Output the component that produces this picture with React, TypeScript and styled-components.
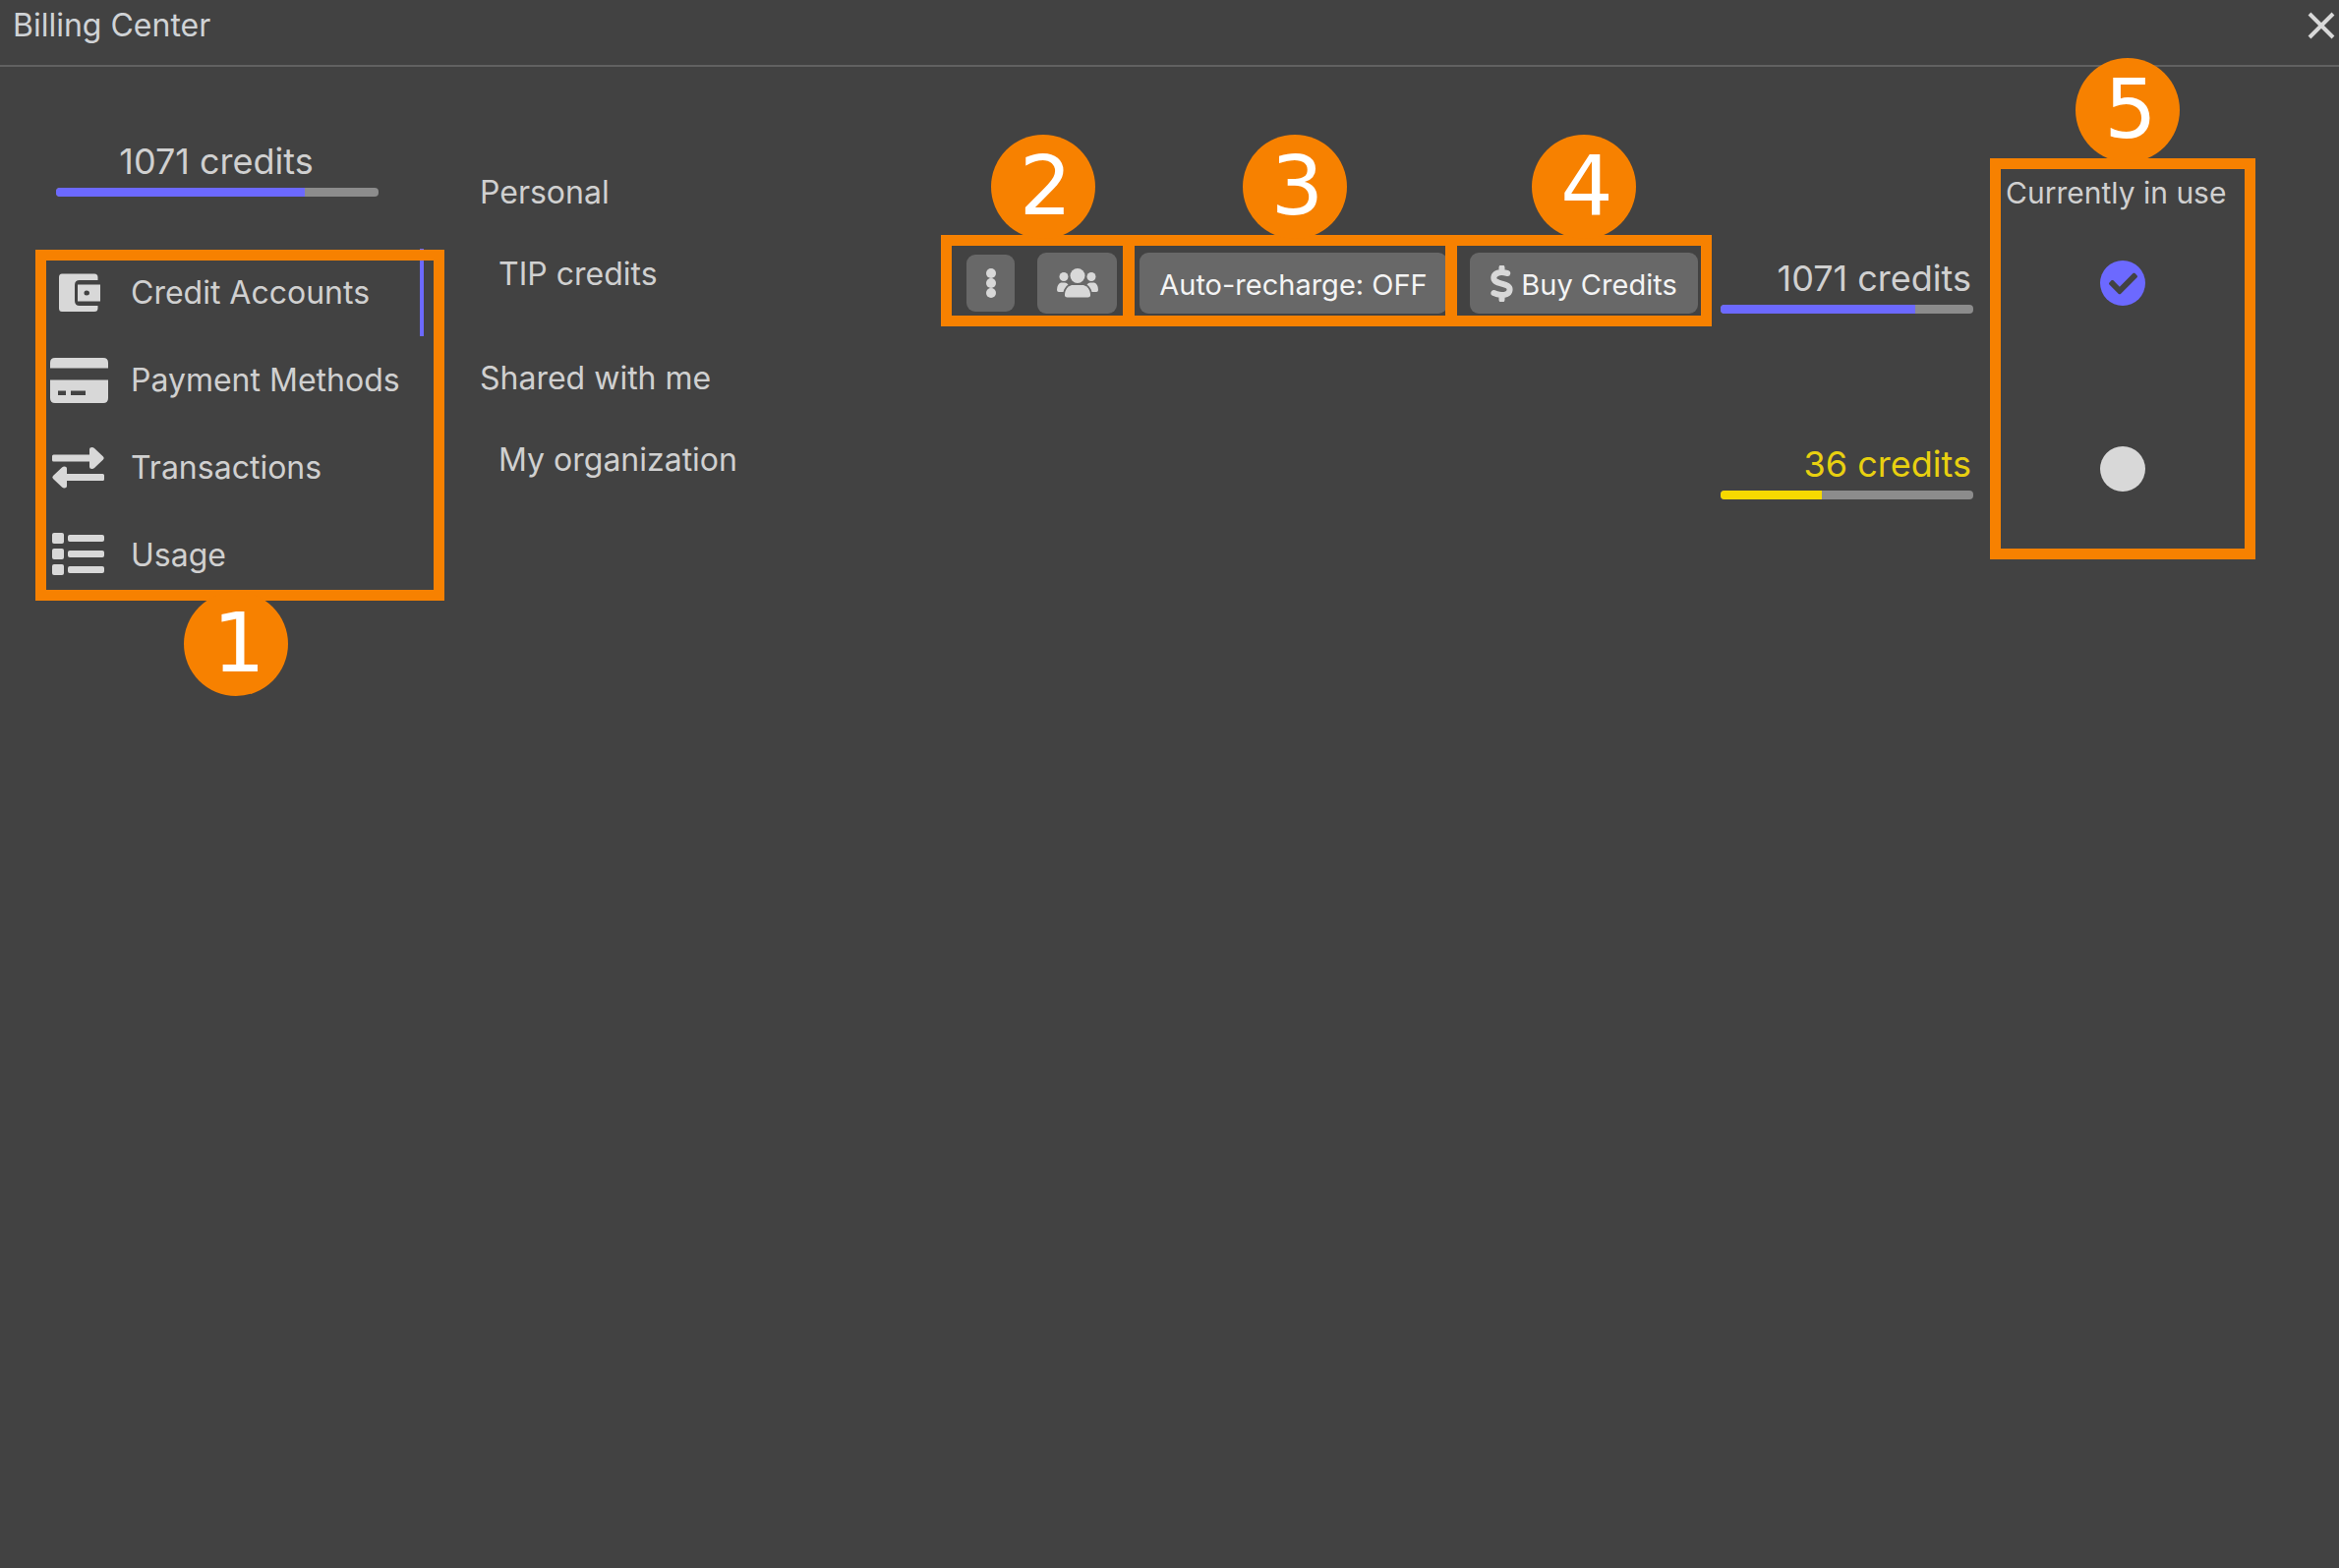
import React from "react";
import styled, { createGlobalStyle } from "styled-components";
import { FaCheck } from "react-icons/fa";
import { FaDollarSign } from "react-icons/fa6";

const colors = {
  surface: "#424242",
  line: "#616161",
  text: "#d0d0d0",
  icon: "#d8d8d8",
  control: "#686868",
  track: "#8c8c8c",
  accent: "#6c69ff",
  warning: "#f6d900",
  warningText: "#e8d010",
  callout: "#f78100",
};

const GlobalStyle = createGlobalStyle`
  *, *::before, *::after { box-sizing: border-box; }
  body {
    margin: 0;
    background: ${colors.surface};
    color: ${colors.text};
    font-family: Inter, "Liberation Sans", sans-serif;
    font-size: 32px;
    line-height: 44px;
  }
`;

const Page = styled.div`
  min-height: 100vh;
  display: flex;
  flex-direction: column;
`;

const Header = styled.header`
  display: flex;
  align-items: center;
  justify-content: space-between;
  height: 68px;
  padding: 0 4px 14px 13px;
  border-bottom: 2px solid ${colors.line};
`;

const Title = styled.h1`
  margin: 0;
  font-size: 32px;
  font-weight: 400;
  color: #d0d3d6;
`;

const CloseButton = styled.button`
  display: flex;
  padding: 0;
  border: 0;
  background: none;
  color: ${colors.icon};
  cursor: pointer;
`;

const Body = styled.div`
  display: flex;
  flex: 1;
`;

const Sidebar = styled.aside`
  width: 431px;
  flex: none;
  padding-top: 70px;
`;

const Summary = styled.div`
  padding: 0 46px 53px 57px;
`;

const BalanceBlock = styled.div<{ $align: "center" | "right" }>`
  text-align: ${(p) => p.$align};
  font-size: 36px;
  line-height: 53px;
`;

const BalanceText = styled.div<{ $low?: boolean }>`
  padding-right: 2px;
  white-space: nowrap;
  color: ${(p) => (p.$low ? colors.warningText : colors.text)};
`;

const Track = styled.div`
  height: 9px;
  border-radius: 4px;
  overflow: hidden;
  background: ${colors.track};
`;

const Fill = styled.div<{ $low?: boolean }>`
  height: 100%;
  background: ${(p) => (p.$low ? colors.warning : colors.accent)};
`;

const Nav = styled.nav`
  position: relative;
`;

const NavLink = styled.a<{ $active?: boolean }>`
  display: flex;
  align-items: center;
  gap: 21px;
  height: 89px;
  padding-left: 50px;
  border-right: 4px solid ${(p) => (p.$active ? colors.accent : "transparent")};
  color: ${colors.text};
  text-decoration: none;
  white-space: nowrap;

  svg {
    flex: none;
    color: ${colors.icon};
  }
`;

const Main = styled.main`
  flex: 1;
  padding: 84px 101px 0 57px;
`;

const Accounts = styled.table`
  width: 100%;
  table-layout: fixed;
  border-collapse: collapse;

  th, td {
    padding: 0;
    text-align: left;
    vertical-align: top;
    font-weight: 400;
    white-space: nowrap;
  }
`;

const Col = styled.col<{ $width?: number }>`
  width: ${(p) => (p.$width ? `${p.$width}px` : "auto")};
`;

const GroupRow = styled.tr`
  height: 105px;

  && > th { padding-top: 22px; }
`;

const AccountRow = styled.tr`
  height: 84px;
`;

const AccountName = styled.th`
  && { padding-left: 19px; }
`;

const BalanceCell = styled.td`
  && { padding-left: 23px; }
`;

const InUseCell = styled.td`
  && { padding-left: 33px; }
`;

const UseHeading = styled.div`
  position: relative;
  font-size: 30px;
`;

const Actions = styled.div`
  display: flex;
  align-items: center;
  justify-content: flex-end;
  height: 62px;
  gap: 23px;
`;

const ActionGroup = styled.div`
  position: relative;
  display: flex;
  align-items: center;
  gap: 23px;
`;

const Button = styled.button<{ $width: number; $height?: number }>`
  display: flex;
  align-items: center;
  justify-content: center;
  gap: 8px;
  width: ${(p) => p.$width}px;
  height: ${(p) => p.$height ?? 62}px;
  padding: 4px 0 0;
  border: 0;
  border-radius: 9px;
  background: ${colors.control};
  color: #f4f4f4;
  font: inherit;
  font-size: 29px;
  white-space: nowrap;
  cursor: pointer;

  svg {
    flex: none;
    color: ${colors.icon};
  }
`;

const IconButton = styled(Button)`
  padding: 0;
`;

const DollarIcon = styled(FaDollarSign)`
  width: 23px;
  height: 37px;
  margin-bottom: 4px;
  stroke: currentColor;
  stroke-width: 20px;
`;

const UseOption = styled.label`
  display: flex;
  align-items: center;
  justify-content: center;
  height: 62px;
  cursor: pointer;
`;

const UseRadio = styled.input`
  appearance: none;
  width: 46px;
  height: 46px;
  margin: 0;
  border-radius: 50%;
  background: ${colors.icon};
  grid-area: 1 / 1;

  &:checked { background: ${colors.accent}; }
`;

const RadioStack = styled.span`
  display: grid;
  place-items: center;

  svg {
    grid-area: 1 / 1;
    color: ${colors.surface};
    pointer-events: none;
  }
`;

const CalloutFrame = styled.div<{ $inset: string; $height?: number }>`
  position: absolute;
  inset: ${(p) => p.$inset};
  height: ${(p) => (p.$height ? `${p.$height}px` : "auto")};
  border: 11px solid ${colors.callout};
  pointer-events: none;
`;

const CalloutNumber = styled.span<{ $below?: boolean }>`
  position: absolute;
  left: 50%;
  ${(p) => (p.$below ? "top: calc(100% + 2px);" : "bottom: calc(100% + 7px);")}
  width: 106px;
  height: 106px;
  margin-left: ${(p) => (p.$below ? -57 : -48)}px;
  padding-left: 6px;
  border-radius: 50%;
  background: ${colors.callout};
  color: #fff;
  font-family: "DejaVu Sans", sans-serif;
  font-size: 84px;
  line-height: 104px;
  text-align: center;
`;

type CalloutProps = { number: number; inset: string; height?: number; below?: boolean };

const Callout = ({ number, inset, height, below }: CalloutProps) => (
  <CalloutFrame $inset={inset} $height={height}>
    <CalloutNumber $below={below}>{number}</CalloutNumber>
  </CalloutFrame>
);

const WalletIcon = () => (
  <svg width="62" height="46" viewBox="0 0 62 46" fill="currentColor" aria-hidden="true">
    <path
      fillRule="evenodd"
      d="M13 3.500H46Q49.500 3.500 49.500 7V10H31Q26 10 26 15V31Q26 36 31 36H49.500V38.500Q49.500 42 46 42H13Q10 42 10 38.500V7Q10 3.500 13 3.500ZM29 14.500H52V31.500H29ZM38 20.500Q35.500 20.500 35.500 23Q35.500 25.500 38 25.500Q41 25.500 41 23Q41 20.500 38 20.500Z"
    />
  </svg>
);

const CardIcon = () => (
  <svg width="62" height="46" viewBox="0 0 62 46" fill="currentColor" aria-hidden="true">
    <path
      fillRule="evenodd"
      d="M6 0H55Q60 0 60 5V10.500H1V5Q1 0 6 0ZM1 22.500H60V41Q60 46 55 46H6Q1 46 1 41ZM9 33.500V38H17V33.500ZM22 33.500V38H37V33.500Z"
    />
  </svg>
);

const TransferIcon = () => (
  <svg width="62" height="46" viewBox="0 0 62 46" fill="currentColor" aria-hidden="true">
    <path d="M4.500 9.500H41V4Q41 2 43.500 2Q45 2 46 3L55 11.500Q56.500 13 55 14.500L46 23Q45 24 43.500 24Q41 24 41 22V16.500H4.500Q3 16.500 3 15V11Q3 9.500 4.500 9.500Z" />
    <path d="M54.500 29H18V23.500Q18 21.500 15.500 21.500Q14 21.500 13 22.500L4 31Q2.500 32.500 4 34L13 42.500Q14 43.500 15.500 43.500Q18 43.500 18 41.500V36H54.500Q56 36 56 34.500V30.500Q56 29 54.500 29Z" />
  </svg>
);

const ListIcon = () => (
  <svg width="62" height="46" viewBox="0 0 62 46" fill="currentColor" aria-hidden="true">
    {[0, 16, 32].map((y) => (
      <g key={y}>
        <rect x="3" y={y} width="12" height="11" rx="2" />
        <rect x="19" y={y + 2} width="37" height="7" rx="2" />
      </g>
    ))}
  </svg>
);

const DotsIcon = () => (
  <svg width="12" height="34" viewBox="0 0 12 34" fill="currentColor" aria-hidden="true">
    <circle cx="6" cy="7" r="5" />
    <circle cx="6" cy="17" r="5" />
    <circle cx="6" cy="27" r="5" />
  </svg>
);

const UsersIcon = () => (
  <svg width="42" height="30" viewBox="0 0 42 30" fill="currentColor" aria-hidden="true">
    <circle cx="21" cy="7.500" r="7.500" />
    <circle cx="7" cy="8.500" r="4.500" />
    <circle cx="35" cy="8.500" r="4.500" />
    <path d="M15 17H27Q33 18.500 34 26V27.500Q34 29.500 31.500 29.500H10.500Q8 29.500 8 27.500V26Q9 18.500 15 17Z" />
    <path d="M4 14.500H8Q10 14.500 11.500 16.500Q7.500 19.500 6.500 24H2Q0 24 0 22Q0 16 4 14.500Z" />
    <path d="M38 14.500H34Q32 14.500 30.500 16.500Q34.500 19.500 35.500 24H40Q42 24 42 22Q42 16 38 14.500Z" />
  </svg>
);

const navItems = [
  { label: "Credit Accounts", Icon: WalletIcon },
  { label: "Payment Methods", Icon: CardIcon },
  { label: "Transactions", Icon: TransferIcon },
  { label: "Usage", Icon: ListIcon },
];

type BalanceProps = { credits: number; percent: number; align?: "center" | "right"; low?: boolean };

const Balance = ({ credits, percent, align = "right", low }: BalanceProps) => (
  <BalanceBlock $align={align}>
    <BalanceText $low={low}>{credits} credits</BalanceText>
    <Track>
      <Fill $low={low} style={{ width: `${percent}%` }} />
    </Track>
  </BalanceBlock>
);

type UseSelectorProps = { label: string; selected: boolean; onSelect: () => void };

const UseSelector = ({ label, selected, onSelect }: UseSelectorProps) => (
  <UseOption>
    <RadioStack>
      <UseRadio type="radio" name="in-use" aria-label={`Use ${label}`} checked={selected} onChange={onSelect} />
      {selected && <FaCheck size={29} />}
    </RadioStack>
  </UseOption>
);

export default function App() {
  const [inUse, setInUse] = React.useState("tip");

  return (
    <>
      <GlobalStyle />
      <Page>
        <Header>
          <Title>Billing Center</Title>
          <CloseButton aria-label="Close">
            <svg width="28" height="28" viewBox="0 0 28 28" stroke="currentColor" strokeWidth="4" aria-hidden="true">
              <path d="M2 2L26 26M26 2L2 26" />
            </svg>
          </CloseButton>
        </Header>
        <Body>
          <Sidebar>
            <Summary>
              <Balance credits={1071} percent={77} align="center" />
            </Summary>
            <Nav>
              {navItems.map(({ label, Icon }, i) => (
                <NavLink key={label} href="#" $active={i === 0}>
                  <Icon />
                  {label}
                </NavLink>
              ))}
              <Callout number={1} inset="1px -21px -2px 36px" below />
            </Nav>
          </Sidebar>
          <Main>
            <Accounts>
              <colgroup>
                <Col />
                <Col $width={767} />
                <Col $width={280} />
                <Col $width={271} />
              </colgroup>
              <tbody>
                <GroupRow>
                  <th colSpan={3}>Personal</th>
                  <InUseCell as="th">
                    <UseHeading>
                      Currently in use
                      <Callout number={5} inset="-13px -16px auto -16px" height={408} />
                    </UseHeading>
                  </InUseCell>
                </GroupRow>
                <AccountRow>
                  <AccountName scope="row">TIP credits</AccountName>
                  <td>
                    <Actions>
                      <ActionGroup>
                        <IconButton $width={49} $height={58} aria-label="More actions">
                          <DotsIcon />
                        </IconButton>
                        <IconButton $width={81} aria-label="Shared users">
                          <UsersIcon />
                        </IconButton>
                        <Callout number={2} inset="-18px -18px -13px -26px" />
                      </ActionGroup>
                      <ActionGroup>
                        <Button $width={313}>Auto-recharge: OFF</Button>
                        <Callout number={3} inset="-18px -9px -13px -17px" />
                      </ActionGroup>
                      <ActionGroup>
                        <Button $width={232}>
                          <DollarIcon />
                          Buy Credits
                        </Button>
                        <Callout number={4} inset="-18px -14px -13px -24px" />
                      </ActionGroup>
                    </Actions>
                  </td>
                  <BalanceCell>
                    <Balance credits={1071} percent={77} />
                  </BalanceCell>
                  <InUseCell>
                    <UseSelector label="TIP credits" selected={inUse === "tip"} onSelect={() => setInUse("tip")} />
                  </InUseCell>
                </AccountRow>
                <GroupRow>
                  <th colSpan={4}>Shared with me</th>
                </GroupRow>
                <AccountRow>
                  <AccountName scope="row">My organization</AccountName>
                  <td />
                  <BalanceCell>
                    <Balance credits={36} percent={40} low />
                  </BalanceCell>
                  <InUseCell>
                    <UseSelector label="My organization" selected={inUse === "org"} onSelect={() => setInUse("org")} />
                  </InUseCell>
                </AccountRow>
              </tbody>
            </Accounts>
          </Main>
        </Body>
      </Page>
    </>
  );
}
